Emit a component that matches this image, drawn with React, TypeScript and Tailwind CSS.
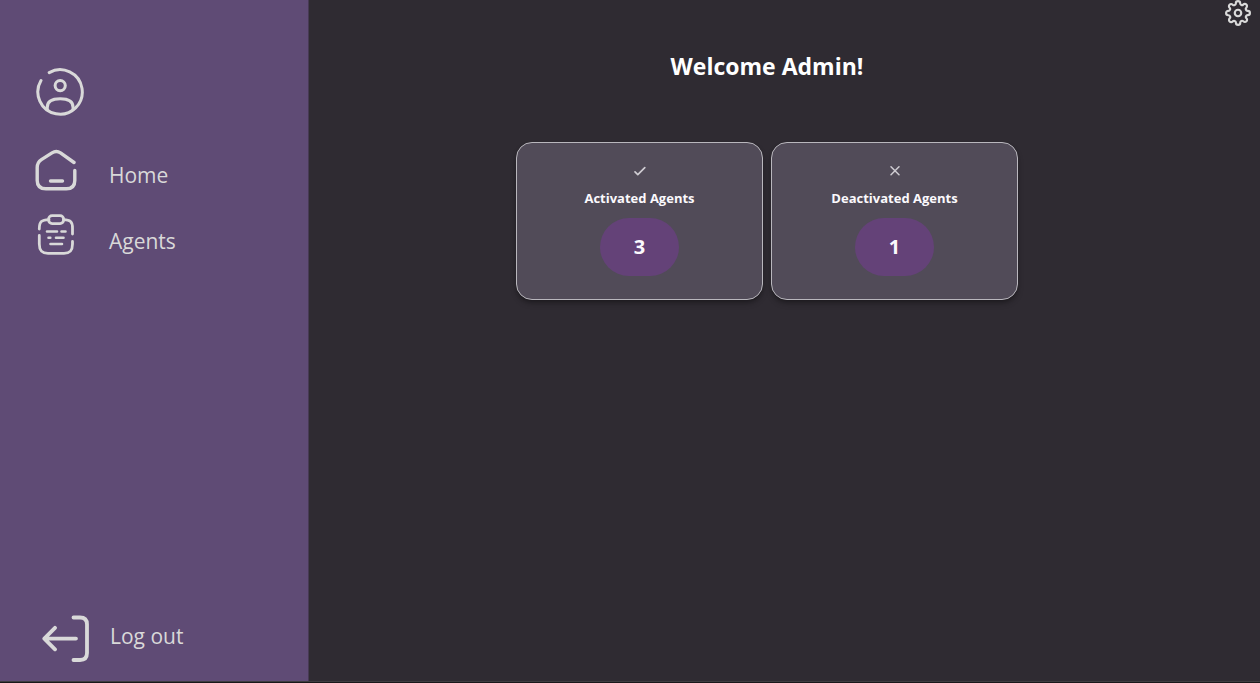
import type { ReactNode } from "react";
import { FiSettings } from "react-icons/fi";

type IconProps = { className?: string };

const stroke = {
  fill: "none",
  stroke: "currentColor",
  strokeLinecap: "round",
  strokeLinejoin: "round",
  "aria-hidden": true,
} as const;

function ProfileIcon({ className }: IconProps) {
  return (
    <svg viewBox="0 0 48 48" strokeWidth="3" className={className} {...stroke}>
      <path d="M13.2 4.6 A22.2 22.2 0 1 1 5 12.6" />
      <circle cx="24.2" cy="17.6" r="5.1" />
      <path d="M11.3 41.5 V39.2 C11.3 33 16.5 30.8 24.2 30.8 C32 30.8 37 33 37 39.2 V41.5" />
    </svg>
  );
}

function HomeIcon({ className }: IconProps) {
  return (
    <svg viewBox="0 0 42 42" strokeWidth="3.4" className={className} {...stroke}>
      <path d="M39.8 21.5 V31.5 C39.8 37 36.8 39.8 31.3 39.8 H11 C5 39.8 2.2 37 2.2 31.5 V18.5 C2.2 14.5 3.4 12.6 6.4 10.6 L17 3.9 C19.9 2.1 22.7 2.1 25.5 3.9 L39 13.5" />
      <path d="M15.5 32 H27.5" />
    </svg>
  );
}

function AgentsIcon({ className }: IconProps) {
  return (
    <svg viewBox="0 0 42 42" strokeWidth="2.8" className={className} {...stroke}>
      <path d="M14 5.6 C6.5 5.8 4.3 7.5 4.3 15" />
      <path d="M4.3 21.5 V30 C4.3 36.8 7 39.3 13 39.3 H29 C35 39.3 37.5 36.8 37.5 30 V27.5" />
      <path d="M28.5 5.6 C35.3 5.8 37.5 7.5 37.5 14 V20" />
      <rect x="13.6" y="1.6" width="15" height="8" rx="3.5" />
      <path
        strokeWidth="2.6"
        d="M12 17.5 H22 M26.5 17.5 H30.5 M13.5 23.7 H15.3 M21 23.7 H28.5 M15.5 30 H27"
      />
    </svg>
  );
}

function LogoutIcon({ className }: IconProps) {
  return (
    <svg viewBox="0 0 48 48" strokeWidth="3.8" className={className} {...stroke}>
      <path d="M31.5 2.5 H38 C42.5 2.5 45 5 45 9.5 V38 C45 42.5 42.5 45 38 45 H31.5" />
      <path d="M34 23.6 H2.3 M13 12.8 L2.3 23.6 L13 34.3" />
    </svg>
  );
}

function CheckIcon({ className }: IconProps) {
  return (
    <svg viewBox="0 0 14 14" strokeWidth="1.7" className={className} {...stroke}>
      <path d="M2 7.8 L4.8 10.6 L11.8 3.6" />
    </svg>
  );
}

function CrossIcon({ className }: IconProps) {
  return (
    <svg viewBox="0 0 14 14" strokeWidth="1.5" className={className} {...stroke}>
      <path d="M3 2.8 L11 10.8 M11 2.8 L3 10.8" />
    </svg>
  );
}

function StatCard({ icon, label, value }: { icon: ReactNode; label: string; value: number }) {
  return (
    <section className="flex w-[247px] flex-col items-center rounded-2xl border border-[#b9b7bd] bg-[#514b58] pt-[21px] pb-[23px] text-[#fbf9fd] shadow-md shadow-black/30">
      <span className="text-[#cfccd2]">{icon}</span>
      <h2 className="mt-[10px] text-[13px] leading-5 font-bold">{label}</h2>
      <p className="mt-[10px] flex h-[58px] w-[79px] items-center justify-center rounded-full bg-[#644278] text-xl font-bold">
        {value}
      </p>
    </section>
  );
}

export default function App() {
  return (
    <div className="flex min-h-screen flex-col border-b border-[#19181a] bg-[#2f2b32] font-['Open_Sans','Noto_Sans',sans-serif] text-[#d9d9d9]">
      <div className="flex flex-1 border-b border-[#3f3d41]">
        <aside className="flex w-[309px] shrink-0 flex-col border-r border-[#473a54] bg-[#5f4b75] px-8 pt-17 pb-[18px]">
          <button type="button" aria-label="Profile" className="ml-1 self-start">
            <ProfileIcon className="size-12" />
          </button>
          <nav className="mt-8 flex flex-1 flex-col text-[21px] leading-8">
            <a href="#home" className="flex h-[54px] items-center gap-8">
              <HomeIcon className="-mt-[10px] ml-[3px] size-[42px]" />
              Home
            </a>
            <a href="#agents" className="mt-3 flex h-[54px] items-center gap-8">
              <AgentsIcon className="-mt-3 ml-[3px] size-[42px]" />
              Agents
            </a>
            <a href="#logout" className="mt-auto flex items-center gap-5 pl-[10px]">
              <LogoutIcon className="size-12" />
              <span className="pb-[6px]">Log out</span>
            </a>
          </nav>
        </aside>
        <main className="flex flex-1">
          <div className="flex flex-1 flex-col items-center pt-[50px]">
            <h1 className="text-[23px] leading-8 font-bold text-white">Welcome Admin!</h1>
            <div className="mt-15 flex flex-wrap justify-center gap-2">
              <StatCard icon={<CheckIcon className="size-[14px]" />} label="Activated Agents" value={3} />
              <StatCard icon={<CrossIcon className="size-[14px]" />} label="Deactivated Agents" value={1} />
            </div>
          </div>
          <button type="button" aria-label="Settings" className="mr-[9px] self-start">
            <FiSettings className="size-[26px]" />
          </button>
        </main>
      </div>
    </div>
  );
}
